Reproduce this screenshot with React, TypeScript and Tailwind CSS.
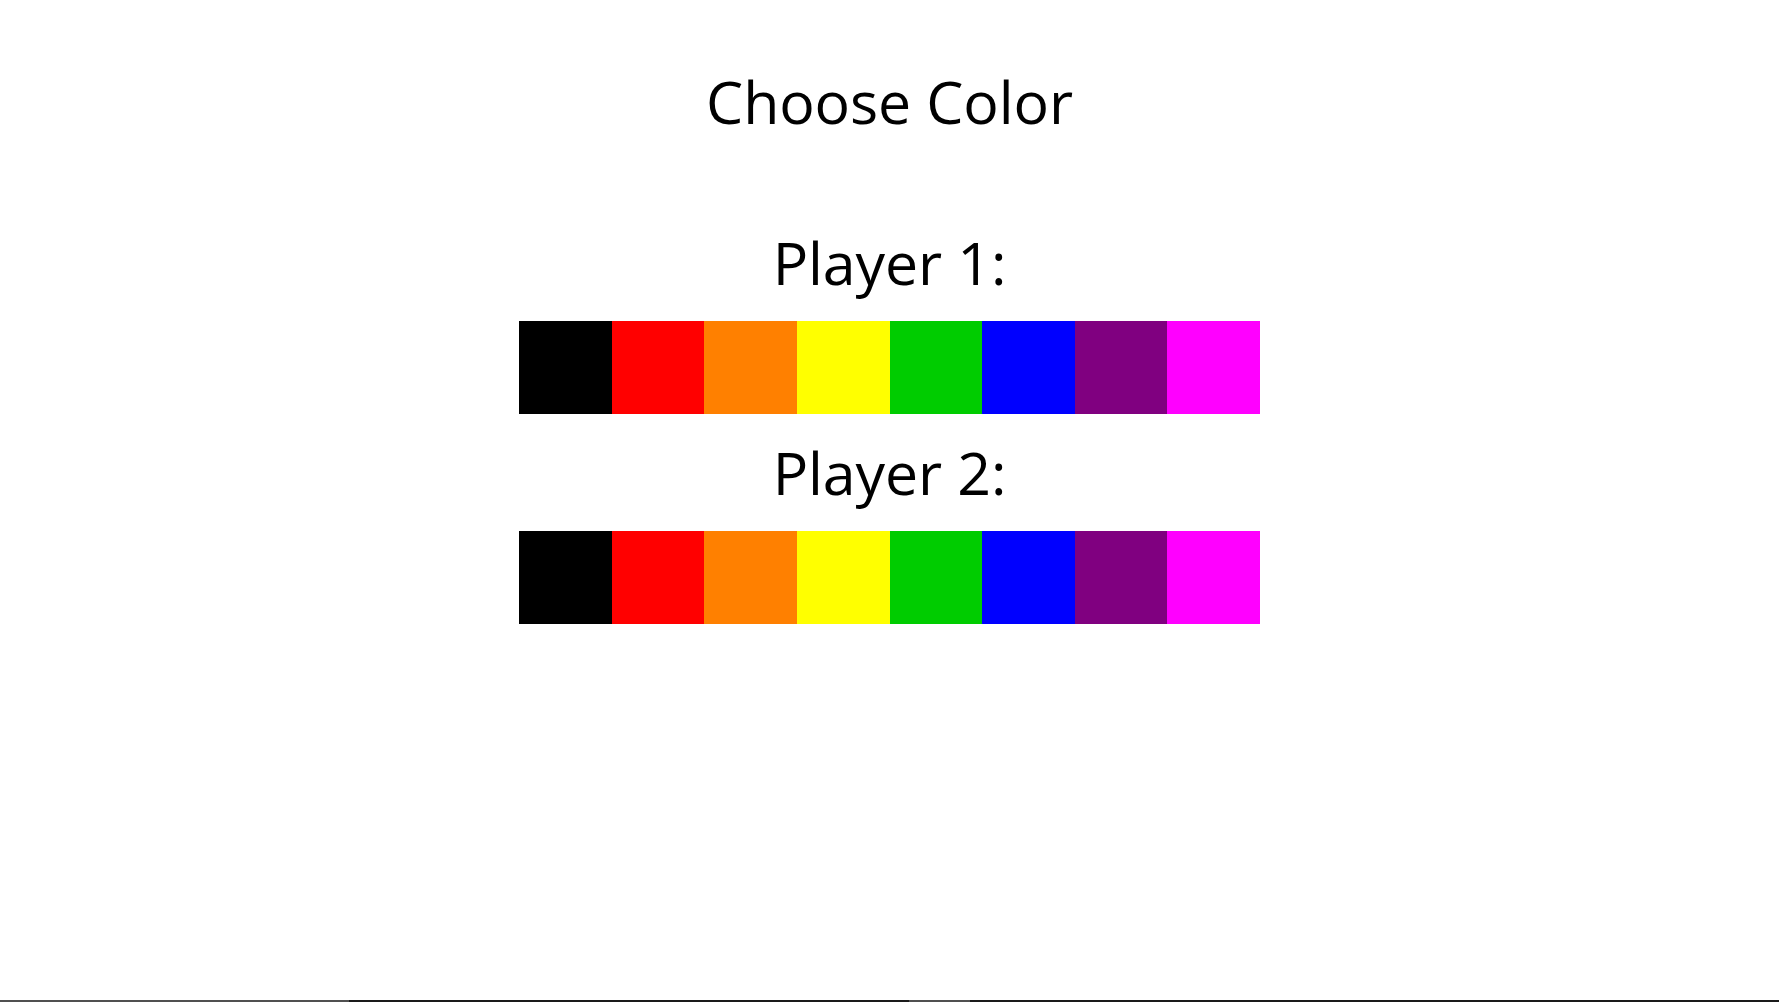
const SWATCHES = [
  "bg-[#000000]",
  "bg-[#ff0000]",
  "bg-[#ff8000]",
  "bg-[#ffff00]",
  "bg-[#00cc00]",
  "bg-[#0000ff]",
  "bg-[#800080]",
  "bg-[#ff00ff]",
];

function ColorRow({ player }: { player: number }) {
  return (
    <div className="grid grid-cols-8 w-[741px] h-[93px]">
      {SWATCHES.map((color) => (
        <button
          key={`${player}-${color}`}
          className={`${color} h-full w-full cursor-pointer`}
          aria-label={`Player ${player} ${color}`}
        />
      ))}
    </div>
  );
}

export default function App() {
  return (
    <div className="h-screen w-full bg-white flex flex-col font-['Open_Sans',sans-serif] text-black">
      <main className="flex-1 flex flex-col items-center">
        <h1 className="mt-[61px] text-[59px] leading-[80px] tracking-[-0.1px] font-normal">
          Choose Color
        </h1>
        <h2 className="mt-[81px] text-[59px] leading-[80px] tracking-[-0.1px] font-normal">
          Player 1:
        </h2>
        <div className="mt-[19px]">
          <ColorRow player={1} />
        </div>
        <h2 className="mt-[18px] text-[59px] leading-[80px] tracking-[-0.1px] font-normal">
          Player 2:
        </h2>
        <div className="mt-[19px]">
          <ColorRow player={2} />
        </div>
      </main>
      <div className="flex h-[2px]">
        <div className="w-[349px] bg-[#505050]" />
        <div className="w-[560px] bg-[#1a1a1a]" />
        <div className="w-[61px] bg-[#505050]" />
        <div className="flex-1 bg-[#1a1a1a]" />
      </div>
    </div>
  );
}
